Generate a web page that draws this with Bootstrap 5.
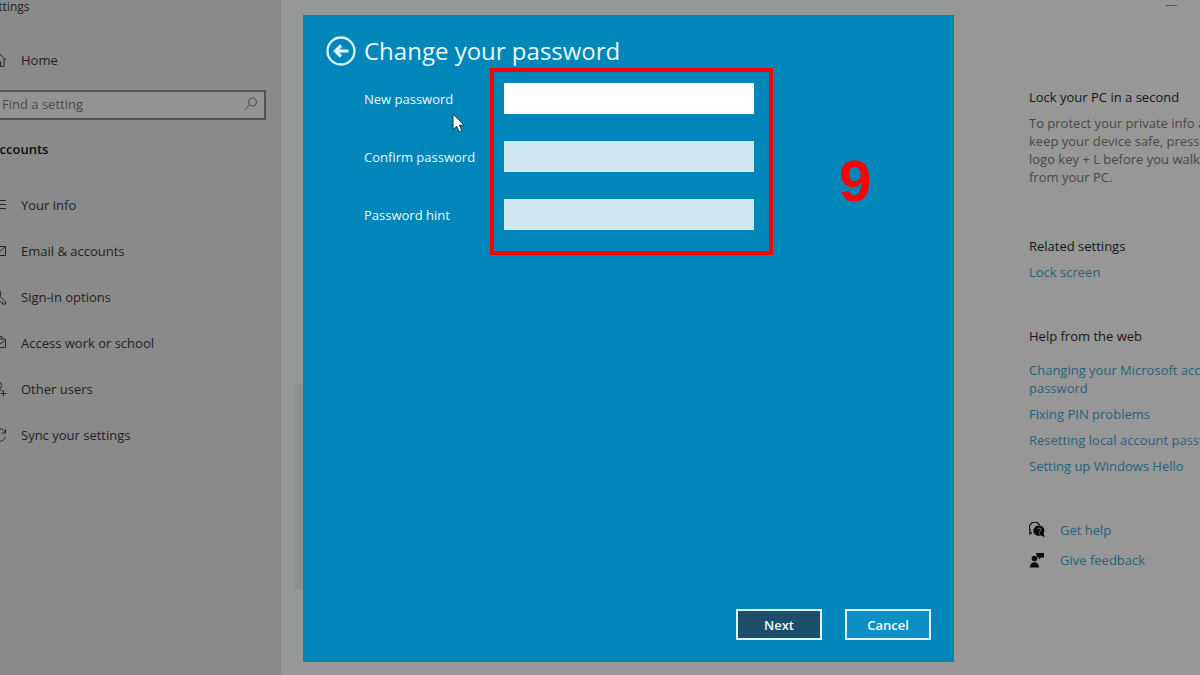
<!DOCTYPE html>
<html lang="en">
<head>
<meta charset="utf-8">
<meta name="viewport" content="width=device-width, initial-scale=1">
<title>Settings</title>
<link href="https://cdn.jsdelivr.net/npm/bootstrap@5.3.0/dist/css/bootstrap.min.css" rel="stylesheet">
<style>
  body { font-family: "Open Sans", "Noto Sans", sans-serif; font-size: 13px; line-height: 18px; background: #979797; color: #1f1f1f; }
  a { text-decoration: none; color: inherit; }
  .side { flex: 0 0 281px; background: #8a8a8a; }
  .side-inner { margin-left: -9px; }
  .app-name { font-size: 12px; line-height: 13px; margin-left: -6px; }
  .side-item { height: 46px; gap: 14px; }
  .ico { width: 16px; height: 16px; flex: none; fill: none; stroke: #262626; stroke-width: 1; }
  .search-box { margin: 7px 15px 0 0; height: 30px; border: 2px solid #525252; background: #939393; padding: 0 5px 2px 9px; }
  .search-box input { background: transparent; border: 0; outline: 0; padding: 0; color: #222; min-width: 0; }
  .search-box input::placeholder { color: #494949; opacity: 1; }
  .search-box .ico { stroke: #4c4c4c; }
  .group-name { margin: 20px 0 24px; font-size: 13px; line-height: 18px; font-weight: 600; color: #0c0c0c; }
  .dialog-pane { margin: 15px 0 13px 22px; background: #0086b8; color: #e6f7fd; padding: 20px 23px 22px; }
  .page-strip { top: 384px; left: 14px; width: 30px; height: 206px; background: #8f8f8f; }
  .dialog-pane h1 { font-size: 24px; line-height: 32px; font-weight: 400; }
  .back { width: 30px; height: 30px; }
  .back svg { display: block; width: 30px; height: 30px; }
  .fields { margin: 16px 0 0 38px; display: grid; grid-template-columns: 140px 250px; row-gap: 27px; align-items: center; width: 390px; }
  .fields input { height: 31px; border: 0; border-radius: 0; background: #d2e8f1; padding: 0 8px; outline: 0; width: 250px; }
  .fields input.current { background: #fff; }
  .callout { top: -15px; left: 126px; width: 283px; height: 187px; border: 4px solid #f00; pointer-events: none; }
  .step-no { top: 66px; left: 475px; font: bold 58px/64px "Liberation Sans", sans-serif; color: #f00; }
  .pointer { top: 30px; left: 88px; width: 13px; height: 20px; }
  .cmds { gap: 23px; }
  .cmd { width: 86px; height: 31px; padding: 0; border: 2px solid #dff5fd; border-radius: 0; background: #0c90c4; color: #f0fbff; font-size: 13px; font-weight: 600; }
  .cmd.go { background: #1b4e69; }
  .help { flex: 0 0 171px; min-width: 0; margin-left: 75px; padding-top: 88px; white-space: nowrap; color: #474747; }
  .help h2 { font-size: 13px; line-height: 18px; font-weight: 400; color: #161616; margin: 0; }
  .help a { color: #25627c; }
  .help h2.sect { margin-top: 51px; }
  .help h2.web { margin-top: 46px; }
  .help-links { gap: 8px; margin-top: 16px; }
  .support { gap: 12px; margin-top: 46px; }
  .support a { gap: 15px; }
  .help svg { width: 16px; height: 16px; flex: none; }
  .min { top: 5px; right: 23px; width: 11px; height: 1px; background: #555; }
</style>
</head>
<body>
<div class="d-flex min-vh-100 overflow-hidden position-relative">
  <aside class="side overflow-hidden">
    <div class="side-inner">
      <div class="app-name">Settings</div>
      <a href="#" class="side-item d-flex align-items-center mt-4">
        <svg class="ico" viewBox="0 0 16 16"><path d="M1 8 8 1.500 15 8M3 6.500V14.500H6.500V9.500H9.500V14.500H13V6.500"/></svg>
        <span>Home</span>
      </a>
      <div class="search-box d-flex align-items-center">
        <input class="flex-grow-1" type="search" placeholder="Find a setting" aria-label="Find a setting">
        <svg class="ico" viewBox="0 0 16 16"><circle cx="9.500" cy="6" r="4"/><path d="M6.700 8.900 2 13.500"/></svg>
      </div>
      <h2 class="group-name">Accounts</h2>
      <nav>
        <a href="#" class="side-item d-flex align-items-center">
          <svg class="ico" viewBox="0 0 16 16"><path d="M8 3.500H15M8 7.500H15M8 11.500H15"/><circle cx="4" cy="5" r="2"/><path d="M1 12C1 7.500 7 7.500 7 12"/></svg>
          <span>Your info</span></a>
        <a href="#" class="side-item d-flex align-items-center">
          <svg class="ico" viewBox="0 0 16 16"><path d="M.5 3.500H14.500V12.500H.5ZM.5 3.500 7.500 9.500 14.500 3.500"/></svg>
          <span>Email &amp; accounts</span></a>
        <a href="#" class="side-item d-flex align-items-center">
          <svg class="ico" viewBox="0 0 16 16"><circle cx="6" cy="5" r="4"/><path d="M9 7.500 14.500 13V15H11.500V13.500H10L8.500 11.500V9"/></svg>
          <span>Sign-in options</span></a>
        <a href="#" class="side-item d-flex align-items-center">
          <svg class="ico" viewBox="0 0 16 16"><path d="M.5 4H14.500V12.500H.5ZM5 4V1.500H11V4M.5 5 9 9 14.500 5.500"/></svg>
          <span>Access work or school</span></a>
        <a href="#" class="side-item d-flex align-items-center">
          <svg class="ico" viewBox="0 0 16 16"><circle cx="7" cy="4.500" r="3.500"/><path d="M1 13.500C1 7 9.500 6.500 11.500 10.500M12.500 9.500V15.500M9.500 12.500H15.500"/></svg>
          <span>Other users</span></a>
        <a href="#" class="side-item d-flex align-items-center">
          <svg class="ico" viewBox="0 0 16 16"><path d="M14.500 6A7 7 0 0 0 1.500 6M14.500 2V6H10.500M14.500 10A7 7 0 0 1 1.500 10M1.500 14V10H5.500"/></svg>
          <span>Sync your settings</span></a>
      </nav>
    </div>
  </aside>

  <main class="flex-grow-1 d-flex position-relative">
    <div class="page-strip position-absolute"></div>
    <section class="dialog-pane flex-grow-1 d-flex flex-column position-relative">
      <header class="d-flex align-items-center">
        <button type="button" class="back btn p-0 border-0 me-2" aria-label="Back">
          <svg viewBox="0 0 30 30" fill="none" stroke="#dff6ff"><circle cx="15" cy="15" r="13.500" stroke-width="2.300"/><path d="M22.500 15H9" stroke-width="3.200"/><path d="M15 9.500 9.500 15 15 20.500" stroke-width="3.200"/></svg>
        </button>
        <h1 class="m-0">Change your password</h1>
      </header>
      <form class="fields position-relative" id="pw">
        <label for="new">New password</label><input class="current" id="new" type="password">
        <label for="confirm">Confirm password</label><input id="confirm" type="password">
        <label for="hint">Password hint</label><input id="hint" type="text">
        <div class="callout position-absolute"></div>
        <div class="step-no position-absolute">9</div>
        <svg class="pointer position-absolute" viewBox="0 0 13 20"><path d="M1 1V16.500L4.700 13.200 7.200 18.800 9.800 17.600 7.400 12.200H12Z" fill="#fff" stroke="#12384d"/></svg>
      </form>
      <footer class="cmds d-flex justify-content-end mt-auto">
        <button type="submit" form="pw" class="cmd go">Next</button>
        <button type="button" class="cmd">Cancel</button>
      </footer>
    </section>
  </main>

  <aside class="help">
    <h2>Lock your PC in a second</h2>
    <p class="m-0 mt-2">To protect your private info and<br>keep your device safe, press Windows<br>logo key + L before you walk away<br>from your PC.</p>
    <h2 class="sect">Related settings</h2>
    <a href="#" class="d-block mt-2">Lock screen</a>
    <h2 class="web">Help from the web</h2>
    <div class="help-links d-flex flex-column">
      <a href="#">Changing your Microsoft account<br>password</a>
      <a href="#">Fixing PIN problems</a>
      <a href="#">Resetting local account password</a>
      <a href="#">Setting up Windows Hello</a>
    </div>
    <div class="support d-flex flex-column">
      <a href="#" class="d-flex align-items-center">
        <svg viewBox="0 0 16 16"><path d="M3 10.500 1 12V8A5.200 5.200 0 0 1 10.500 3" fill="none" stroke="#0a0a0a" stroke-width="1.300"/><path d="M10.500 3.500A5.200 5.200 0 1 0 12 13.200L15.500 15.500 14.600 11.500A5.200 5.200 0 0 0 10.500 3.500Z" fill="#0a0a0a"/><path d="M9 7.500C9 5.500 12 5.700 12 7.500 12 8.600 10.500 8.600 10.500 10M10.500 11V12" fill="none" stroke="#8b8b8b"/></svg>
        <span>Get help</span></a>
      <a href="#" class="d-flex align-items-center">
        <svg viewBox="0 0 16 16" fill="#0a0a0a"><circle cx="5.500" cy="6.500" r="2.800"/><path d="M1 15.500C1 8.500 10 8.500 10 15.500ZM7 1H15V5.500H12L10 7.500V5.500H8.500Z"/></svg>
        <span>Give feedback</span></a>
    </div>
  </aside>
  <div class="min position-absolute"></div>
</div>
<script src="https://cdn.jsdelivr.net/npm/bootstrap@5.3.0/dist/js/bootstrap.bundle.min.js"></script>
</body>
</html>
